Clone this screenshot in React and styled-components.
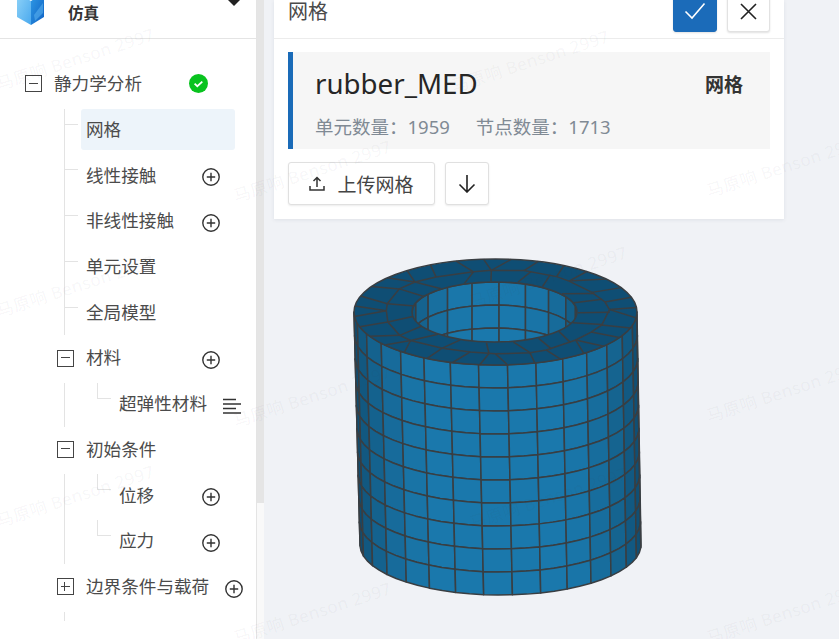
import React from 'react';
import styled, { createGlobalStyle } from 'styled-components';

const FONT = '"Noto Sans CJK SC", "Noto Sans", sans-serif';

const Global = createGlobalStyle`
  html, body { margin: 0; padding: 0; background: #fff; }
  body { font-family: ${FONT}; overflow: hidden; }
`;

const Shell = styled.div`
  position: relative;
  display: flex;
  width: 839px;
  height: 639px;
  overflow: hidden;
  background: #f0f2f6;
`;

const Sidebar = styled.aside`
  width: 256px;
  flex: none;
  background: #fff;
  display: flex;
  flex-direction: column;
`;

const Brand = styled.header`
  flex: none;
  height: 54px;
  margin-top: -15px;
  box-sizing: border-box;
  border-bottom: 1px solid #e4e4e4;
  display: flex;
  align-items: center;
  padding: 0 15px 0 17px;
  position: relative;
`;

const BrandName = styled.span`
  margin-left: 23px;
  font-size: 15.5px;
  font-weight: 700;
  color: #333;
  flex: 1;
`;

const Caret = styled.span`
  width: 0;
  height: 0;
  border-left: 7px solid transparent;
  border-right: 7px solid transparent;
  border-top: 7px solid #222;
  margin-top: -18px;
`;

const Tree = styled.div`
  padding-top: 22px;
  display: flex;
  flex-direction: column;
`;

const Rail = styled.div`
  position: relative;
  min-height: ${p => p.$min || 0}px;
  &::before {
    content: '';
    position: absolute;
    left: 64px;
    top: ${p => p.$top ?? 2}px;
    bottom: ${p => p.$bottom ?? 0}px;
    border-left: 1px solid #e3e3e3;
  }
`;

const Row = styled.div`
  position: relative;
  height: 45.73px;
  box-sizing: border-box;
  display: flex;
  align-items: center;
  padding-left: ${p => p.$indent}px;
  ${p => p.$elbow === 'tick' && `
    &::after {
      content: '';
      position: absolute;
      left: 65px;
      top: 17px;
      width: 13px;
      border-top: 1px solid #e3e3e3;
    }
  `}
  ${p => p.$elbow === 'corner' && `
    &::after {
      content: '';
      position: absolute;
      left: 97px;
      top: 2px;
      height: 15px;
      width: 13px;
      border-left: 1px solid #e3e3e3;
      border-bottom: 1px solid #e3e3e3;
    }
  `}
`;

const Toggle = styled.span`
  flex: none;
  width: 17px;
  height: 17px;
  box-sizing: border-box;
  border: 1.5px solid #444;
  margin-right: 7px;
  position: relative;
  &::before {
    content: '';
    position: absolute;
    left: 3px;
    right: 3px;
    top: 6.25px;
    border-top: 1.5px solid #444;
  }
  ${p => p.$closed && `
    &::after {
      content: '';
      position: absolute;
      top: 3px;
      bottom: 3px;
      left: 6.25px;
      border-left: 1.5px solid #444;
    }
  `}
`;

const Label = styled.span`
  box-sizing: content-box;
  height: 39px;
  display: flex;
  align-items: center;
  padding: 0 5px 2px;
  font-size: 17.6px;
  line-height: 1;
  color: #4b4b4b;
  white-space: nowrap;
  min-width: ${p => p.$min}px;
  border-radius: 3px;
  background: ${p => (p.$selected ? '#edf4fa' : 'transparent')};
`;

const RowIcon = styled.svg`
  flex: none;
  margin-left: 11px;
  margin-top: 4px;
`;

const ScrollTrack = styled.div`
  width: 7px;
  flex: none;
  background: #f9f9f9;
  border-left: 1px solid #e4e4e4;
`;

const ScrollThumb = styled.div`
  height: 503px;
  background: #e5e5e5;
`;

const Main = styled.main`
  flex: 1;
  padding-left: 10px;
  position: relative;
`;

const Panel = styled.section`
  width: 510px;
  height: 219px;
  background: #fff;
  box-shadow: 0 1px 4px rgba(30, 40, 60, 0.08);
  display: flex;
  flex-direction: column;
`;

const PanelHead = styled.div`
  flex: none;
  height: 39px;
  box-sizing: border-box;
  border-bottom: 1px solid #ececec;
  display: flex;
  align-items: flex-end;
  padding: 0 14px 6px;
  gap: 10px;
`;

const PanelTitle = styled.h2`
  margin: 0 auto 8px 0;
  font-size: 20px;
  line-height: 26px;
  font-weight: 400;
  color: #4a4a4a;
`;

const HeadButton = styled.button`
  width: ${p => p.$w}px;
  height: 42px;
  margin-top: -10px;
  padding: 0;
  border: 1px solid ${p => (p.$primary ? '#1b6bb9' : '#e2e2e2')};
  border-radius: 3px;
  background: ${p => (p.$primary ? '#1b6bb9' : '#fff')};
  box-shadow: 0 1px 2px rgba(0, 0, 0, 0.12);
  display: flex;
  align-items: flex-end;
  justify-content: center;
  padding-bottom: 11px;
  box-sizing: border-box;
`;

const PanelBody = styled.div`
  padding: 13px 14px 0;
  display: flex;
  flex-direction: column;
`;

const MeshCard = styled.div`
  height: 97px;
  box-sizing: border-box;
  background: #f6f6f6;
  border-left: 5px solid #1a6bb8;
  padding: 11px 27px 0 22px;
`;

const CardTop = styled.div`
  display: flex;
  align-items: center;
  justify-content: space-between;
  height: 41px;
`;

const MeshName = styled.span`
  font-family: "Noto Sans", sans-serif;
  font-size: 27.7px;
  line-height: 41px;
  color: #262626;
`;

const MeshTag = styled.span`
  font-size: 19px;
  font-weight: 700;
  color: #333;
`;

const Stats = styled.div`
  display: flex;
  gap: 26px;
  margin-top: 11px;
  font-size: 18.5px;
  line-height: 24px;
  color: #808a94;
  font-family: "Noto Sans", "Noto Sans CJK SC", sans-serif;
`;

const Actions = styled.div`
  display: flex;
  gap: 10px;
  margin-top: 13px;
`;

const ActionButton = styled.button`
  height: 43px;
  width: ${p => p.$w}px;
  box-sizing: border-box;
  padding: 0;
  border: 1px solid #e0e0e0;
  border-radius: 3px;
  background: #fff;
  box-shadow: 0 1px 2px rgba(0, 0, 0, 0.08);
  display: flex;
  align-items: center;
  justify-content: center;
  gap: 12px;
  font-family: ${FONT};
  font-size: 19px;
  color: #444;
`;

const ModelWrap = styled.svg`
  position: absolute;
  left: 0;
  top: 0;
  pointer-events: none;
`;

const Watermark = styled.span.attrs(p => ({
  style: { left: p.$x, top: p.$y },
}))`
  position: absolute;
  transform: translate(-50%, -50%) rotate(-18deg);
  font-family: "Noto Sans", "Noto Sans CJK SC", sans-serif;
  font-size: 17px;
  letter-spacing: 0.4px;
  white-space: nowrap;
  color: rgba(60, 60, 70, 0.05);
  pointer-events: none;
`;

const PlusIcon = () => (
  <RowIcon width="18" height="18" viewBox="0 0 18 18" fill="none" stroke="#333" strokeWidth="1.4">
    <circle cx="9" cy="9" r="8.2" />
    <path d="M9 4.8v8.4M4.8 9h8.4" />
  </RowIcon>
);

const DoneIcon = () => (
  <RowIcon style={{ marginTop: 0 }} width="19" height="19" viewBox="0 0 19 19" fill="none">
    <circle cx="9.5" cy="9.5" r="9.5" fill="#09c31f" />
    <path d="M5.6 9.7l2.7 2.5 5-4.6" stroke="#fff" strokeWidth="1.8" />
  </RowIcon>
);

const ListIcon = () => (
  <RowIcon width="18" height="16" viewBox="0 0 18 16" fill="none" stroke="#333" strokeWidth="1.3">
    <path d="M0 1.5h13M0 6h18M0 10.5h13M0 15h18" />
  </RowIcon>
);

const mix = (a, b, t) => {
  const v = a.map((c, i) => Math.round(c + (b[i] - c) * t));
  return `rgb(${v[0]},${v[1]},${v[2]})`;
};
const DARK = [14, 72, 106];
const LIGHT = [26, 120, 172];
const LINE = '#393e42';
const SW = 1.5;

function sidePoint(theta, t) {
  const cx = 495.5 + 5 * t;
  const rx = 141.5 - t;
  const cy = 312 + 233 * t;
  const ry = 53 - 3 * t;
  return [cx + rx * Math.sin(theta), cy + ry * Math.cos(theta)];
}

function buildSide() {
  const edges = [-Math.PI / 2];
  for (let k = -8; k <= 7; k++) edges.push(0.085 + 0.205 * k);
  edges.push(Math.PI / 2);
  const list = [];
  for (let c = 0; c < edges.length - 1; c++) {
    const a = edges[c];
    const b = edges[c + 1];
    const mid = (a + b) / 2;
    const fill = mix(DARK, LIGHT, Math.min(1, Math.pow(Math.cos(mid), 1.1) * 1.15));
    for (let r = 0; r < 10; r++) {
      const t0 = r / 10;
      const t1 = (r + 1) / 10;
      const steps = [a, (a + b) / 2, b];
      const pts = [
        ...steps.map(s => sidePoint(s, t0)),
        ...steps.slice().reverse().map(s => sidePoint(s, t1)),
      ];
      list.push({ key: `${c}-${r}`, fill, points: pts.map(p => p.join(',')).join(' ') });
    }
  }
  return list;
}

const ringPoint = (theta, s) => [495.5 + 141.5 * s * Math.sin(theta), 312 + 53 * s * Math.cos(theta)];
const midS = th => 0.79 + 0.018 * Math.sin(th * 5);

function buildRing() {
  const segs = [];
  const M = 24;
  const nearest = th => {
    const i = Math.round((th * M) / (2 * Math.PI));
    return (i * 2 * Math.PI) / M + 0.06 * Math.sin(i * 2.3);
  };
  for (let k = 0; k < 32; k++) {
    const th = 0.085 + (2 * Math.PI * k) / 32;
    segs.push([ringPoint(th, 1), ringPoint(nearest(th), midS(nearest(th)))]);
  }
  for (let k = 0; k < 19; k++) {
    const th = 0.055 + Math.PI + (2 * Math.PI * k) / 19;
    segs.push([ringPoint(th, 0.583), ringPoint(nearest(th), midS(nearest(th)))]);
  }
  const mid = [];
  for (let i = 0; i < M; i++) {
    const th = (i * 2 * Math.PI) / M + 0.06 * Math.sin(i * 2.3);
    mid.push(ringPoint(th, midS(th)).join(','));
  }
  return { segs, mid: mid.join(' ') };
}

function buildWall() {
  const list = [];
  const rx = 82.5;
  const ry = 30;
  const pt = (th, d) => [494.5 + rx * Math.sin(th), 312 - ry * Math.cos(th) + d * 23];
  for (let c = -6; c < 5; c++) {
    const a = 0.055 + 0.33 * c;
    const b = a + 0.33;
    const mid = (a + b) / 2;
    const fill = mix(DARK, LIGHT, Math.min(1, Math.pow(Math.max(0, Math.cos(mid)), 0.8) * 1.05));
    for (let r = 0; r < 4; r++) {
      const pts = [pt(a, r), pt(mid, r), pt(b, r), pt(b, r + 1), pt(mid, r + 1), pt(a, r + 1)];
      list.push({ key: `${c}-${r}`, fill, points: pts.map(p => p.join(',')).join(' ') });
    }
  }
  return list;
}

const Model = () => {
  const side = buildSide();
  const ring = buildRing();
  const wall = buildWall();
  return (
    <ModelWrap width="839" height="639" viewBox="0 0 839 639">
      <defs>
        <clipPath id="hole">
          <ellipse cx="494.5" cy="312" rx="82.5" ry="30" />
        </clipPath>
      </defs>
      {side.map(q => (
        <polygon key={q.key} points={q.points} fill={q.fill} stroke={LINE} strokeWidth={SW} strokeLinejoin="round" />
      ))}
      <ellipse cx="495.5" cy="312" rx="141.5" ry="53" fill="#0f4e74" stroke={LINE} strokeWidth={SW} />
      {ring.segs.map((s, i) => (
        <line key={i} x1={s[0][0]} y1={s[0][1]} x2={s[1][0]} y2={s[1][1]} stroke={LINE} strokeWidth={SW} />
      ))}
      <polygon points={ring.mid} fill="none" stroke={LINE} strokeWidth={SW} />
      <ellipse cx="494.5" cy="312" rx="82.5" ry="30" fill="#156a98" />
      <g clipPath="url(#hole)">
        {wall.map(q => (
          <polygon key={q.key} points={q.points} fill={q.fill} stroke={LINE} strokeWidth={SW} />
        ))}
      </g>
      <ellipse cx="494.5" cy="312" rx="82.5" ry="30" fill="none" stroke={LINE} strokeWidth={SW} />
    </ModelWrap>
  );
};

const Logo = () => (
  <svg width="28" height="26" viewBox="0 0 28 26" style={{ flex: 'none' }}>
    <defs>
      <linearGradient id="cubeR" x1="0" y1="0" x2="1" y2="1">
        <stop offset="0" stopColor="#2f9ae6" />
        <stop offset="1" stopColor="#0f62c4" />
      </linearGradient>
      <linearGradient id="cubeL" x1="0" y1="0" x2="1" y2="1">
        <stop offset="0" stopColor="#8fd3f8" />
        <stop offset="1" stopColor="#4aa9ee" />
      </linearGradient>
    </defs>
    <polygon points="0,-6 14,2 14,26 0,18" fill="url(#cubeL)" />
    <polygon points="14,2 27,-6 27,18 14,26" fill="url(#cubeR)" />
    <polygon points="17,16 26,4 26,14 18,22" fill="#5cb4f0" opacity="0.55" />
  </svg>
);

const MARKS = [
  [75, 58], [530, 60],
  [312, 170], [785, 165],
  [75, 285], [548, 276],
  [312, 395], [785, 390],
  [75, 495], [548, 497],
  [312, 612], [785, 612],
];

const Tick = ({ children, action, min = 100, selected }) => (
  <Row $indent={81} $elbow="tick">
    <Label $min={selected ? 144 : min} $selected={selected}>{children}</Label>
    {action}
  </Row>
);

const Leaf = ({ children, action }) => (
  <Row $indent={114} $elbow="corner">
    <Label $min={67}>{children}</Label>
    {action}
  </Row>
);

const Branch = ({ children, action, closed }) => (
  <Row $indent={57}>
    <Toggle $closed={closed} />
    <Label $min={100}>{children}</Label>
    {action}
  </Row>
);

export default function App() {
  return (
    <Shell>
      <Global />
      <Sidebar>
        <Brand>
          <Logo />
          <BrandName>仿真</BrandName>
          <Caret />
        </Brand>
        <Tree>
          <Row $indent={25}>
            <Toggle />
            <Label $min={119}>静力学分析</Label>
            <DoneIcon />
          </Row>
          <Rail>
            <Tick selected>网格</Tick>
            <Tick action={<PlusIcon />}>线性接触</Tick>
            <Tick action={<PlusIcon />}>非线性接触</Tick>
            <Tick>单元设置</Tick>
            <Tick>全局模型</Tick>
          </Rail>
          <Branch action={<PlusIcon />}>材料</Branch>
          <Rail>
            <Leaf action={<ListIcon />}>超弹性材料</Leaf>
          </Rail>
          <Branch>初始条件</Branch>
          <Rail>
            <Leaf action={<PlusIcon />}>位移</Leaf>
            <Leaf action={<PlusIcon />}>应力</Leaf>
          </Rail>
          <Branch closed action={<PlusIcon />}>边界条件与载荷</Branch>
          <Rail $min={11} />
        </Tree>
      </Sidebar>
      <ScrollTrack>
        <ScrollThumb />
      </ScrollTrack>
      <Main>
        <Panel>
          <PanelHead>
            <PanelTitle>网格</PanelTitle>
            <HeadButton $primary $w={44}>
              <svg width="22" height="18" viewBox="0 0 22 18" fill="none" stroke="#fff" strokeWidth="1.6">
                <path d="M1.5 9.5l6.5 6.5L20.5 1.5" />
              </svg>
            </HeadButton>
            <HeadButton $w={43}>
              <svg width="17" height="17" viewBox="0 0 17 17" fill="none" stroke="#222" strokeWidth="1.6">
                <path d="M1 1l15 15M16 1L1 16" />
              </svg>
            </HeadButton>
          </PanelHead>
          <PanelBody>
            <MeshCard>
              <CardTop>
                <MeshName>rubber_MED</MeshName>
                <MeshTag>网格</MeshTag>
              </CardTop>
              <Stats>
                <span>单元数量：1959</span>
                <span>节点数量：1713</span>
              </Stats>
            </MeshCard>
            <Actions>
              <ActionButton $w={147}>
                <svg width="16" height="15" viewBox="0 0 16 15" fill="none" stroke="#333" strokeWidth="1.5">
                  <path d="M8 11V2M4.5 5L8 1.5 11.5 5M1 10v4h14v-4" />
                </svg>
                上传网格
              </ActionButton>
              <ActionButton $w={44}>
                <svg width="18" height="19" viewBox="0 0 18 19" fill="none" stroke="#222" strokeWidth="1.6">
                  <path d="M9 1v17M1.5 10.5L9 18l7.5-7.5" />
                </svg>
              </ActionButton>
            </Actions>
          </PanelBody>
        </Panel>
      </Main>
      <Model />
      {MARKS.map(([x, y]) => (
        <Watermark key={`${x}-${y}`} $x={x} $y={y}>马原响 Benson 2997</Watermark>
      ))}
    </Shell>
  );
}
